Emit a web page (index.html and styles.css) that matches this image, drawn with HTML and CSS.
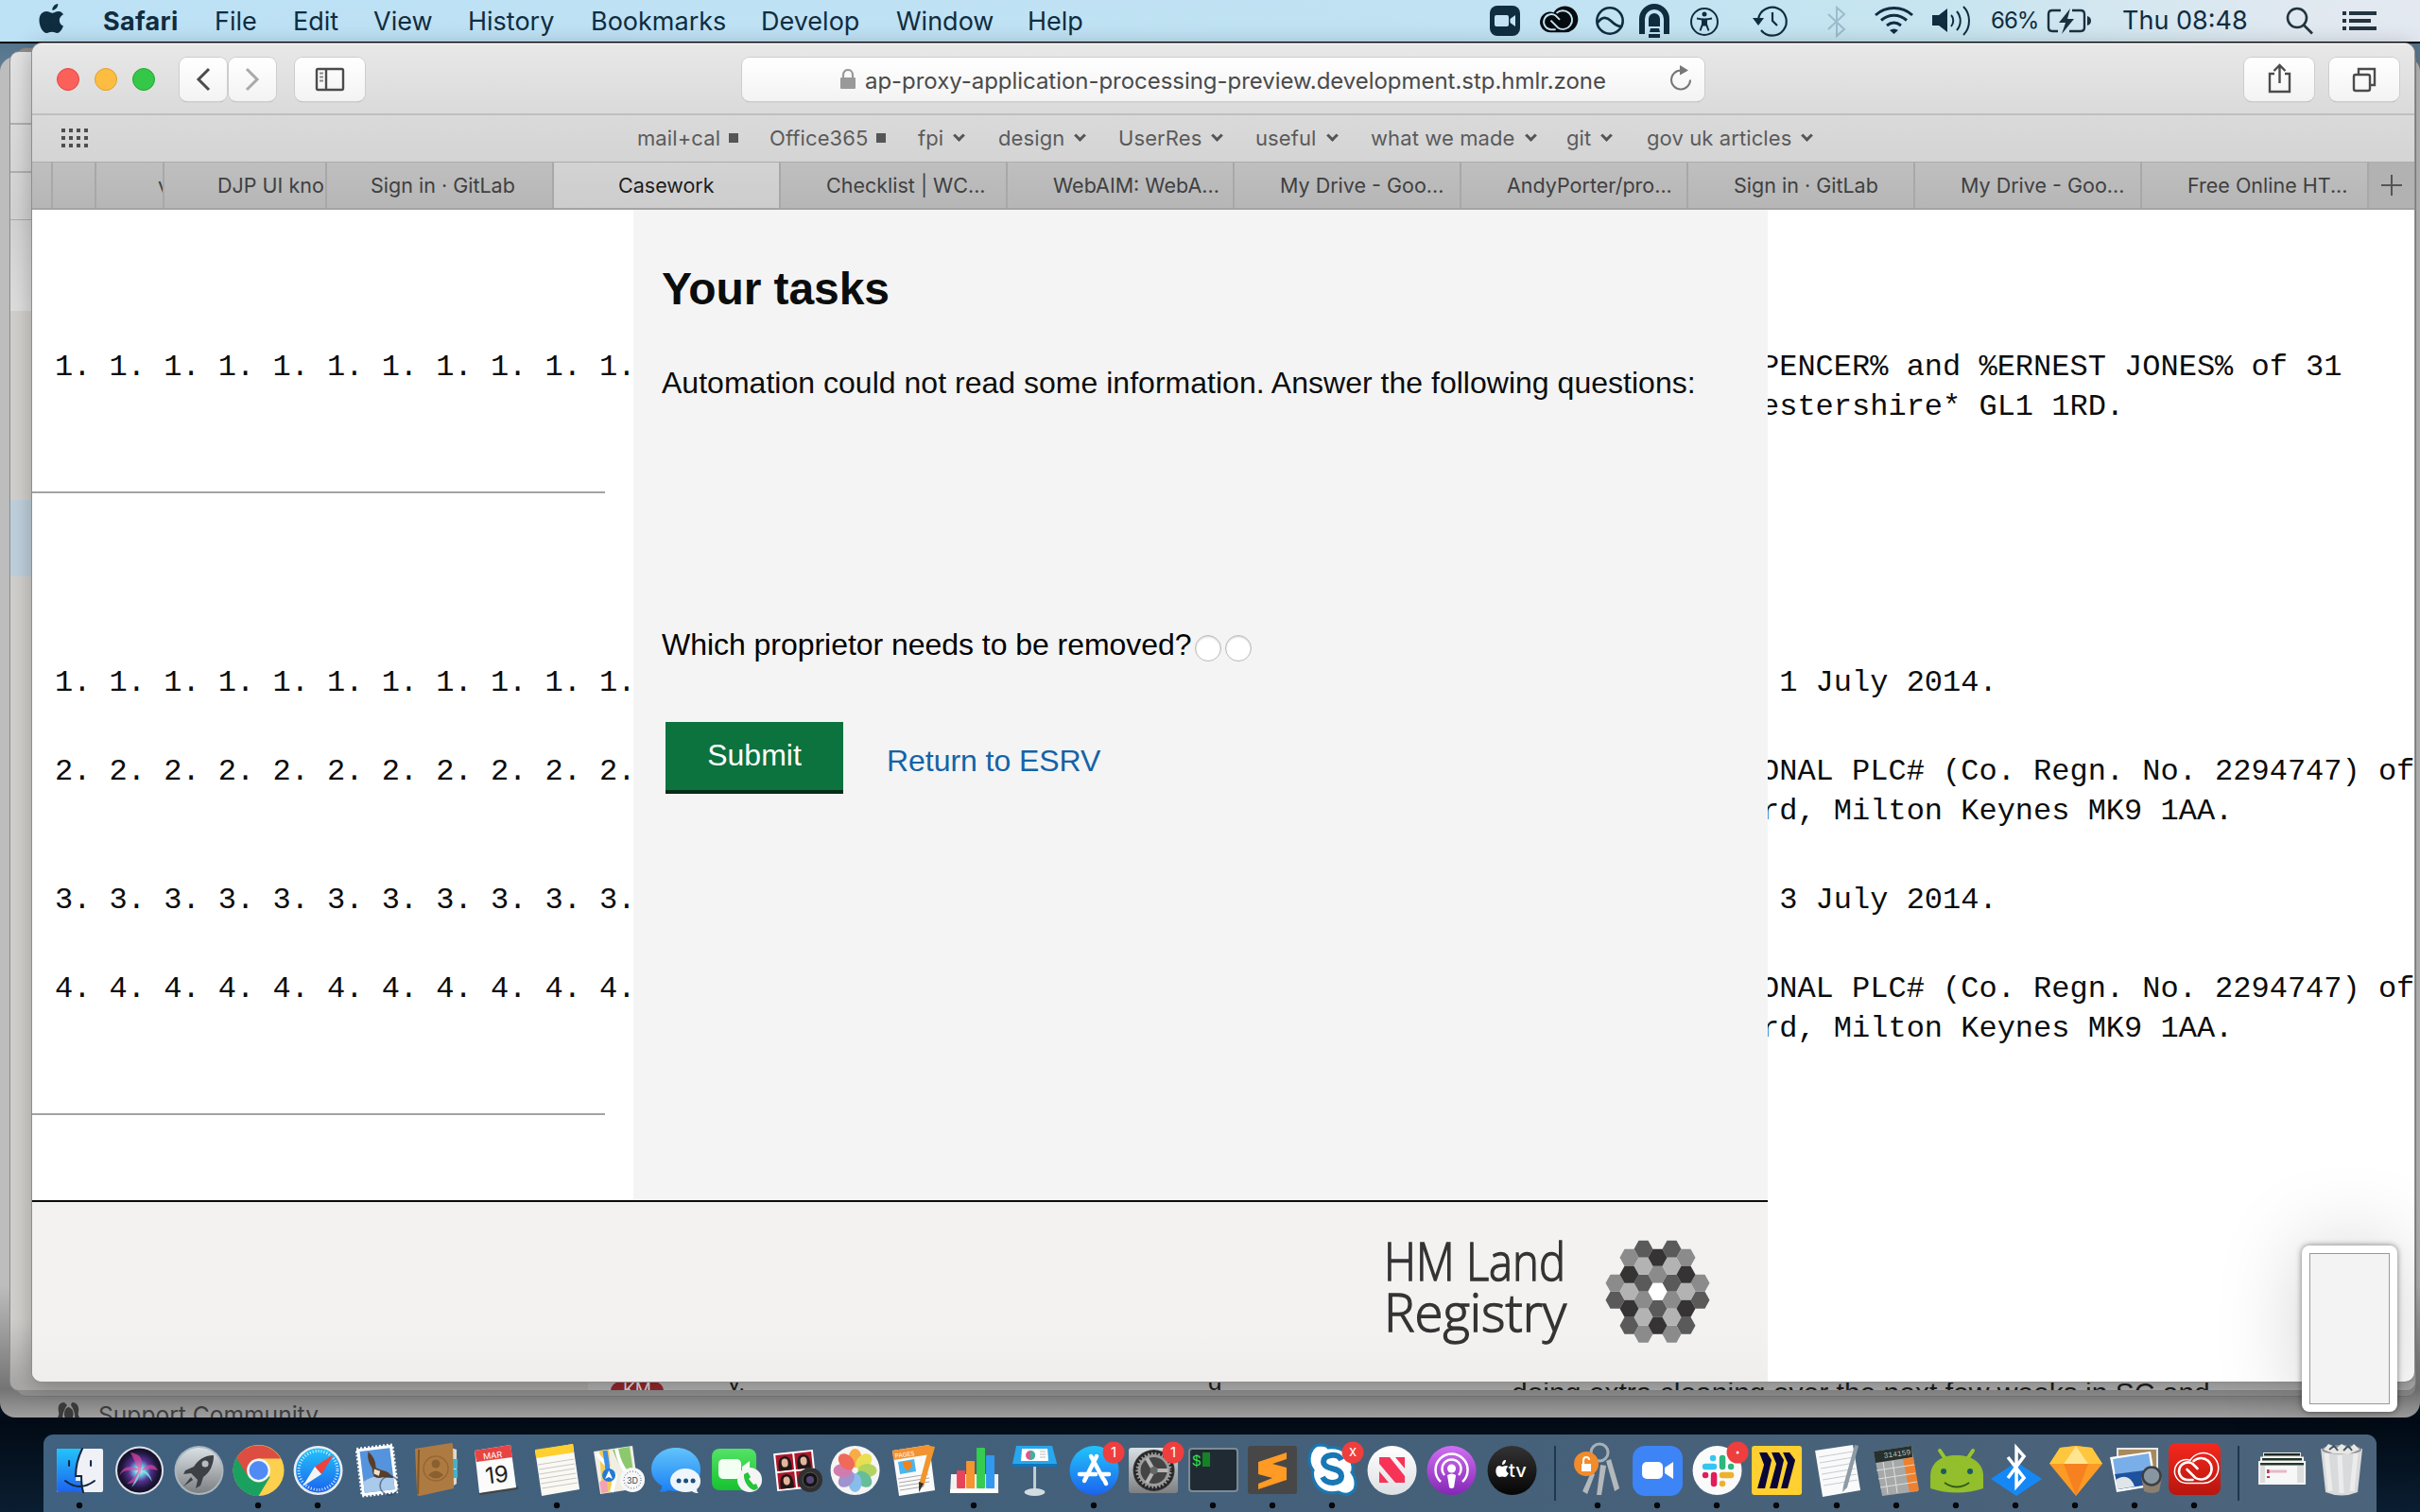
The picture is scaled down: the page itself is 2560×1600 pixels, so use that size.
FILE: index.html
```
<!DOCTYPE html>
<html lang="en">
<head>
<meta charset="utf-8">
<title>Casework</title>
<link rel="stylesheet" href="styles.css">
</head>
<body>
<div class="desktop">
  <header class="menubar">
    <svg class="apple" width="30" height="44" viewBox="0 0 30 44"><path fill="#102d40" d="M22 12c-3 0-4.500 1.700-6.500 1.700S11.500 12 9 12c-4 0-7.500 3.500-7.500 9.500C1.500 28 5.500 35 9.300 35c2 0 3.200-1.200 5.700-1.200 2.400 0 3.400 1.200 5.600 1.200 2.700 0 5-4 6.400-7.500-5.600-2.500-5.400-9.800 0-12.300C26 13.300 24.300 12 22 12zM15.300 10.800c-.2-3.500 2.800-6.600 6-6.800.4 3.700-2.700 6.800-6 6.800z"/></svg>
    <nav class="menus">
      <b>Safari</b><span>File</span><span>Edit</span><span>View</span><span>History</span><span>Bookmarks</span><span>Develop</span><span>Window</span><span>Help</span>
    </nav>
    <div class="status">
      <svg viewBox="1576 0 53 44" width="53" height="44"><rect x="1576" y="6" width="32" height="32" rx="8" fill="#102d40"/><rect x="1581" y="16" width="15" height="12" rx="2" fill="#c3e3f3"/><path fill="#c3e3f3" d="M1597.500 20l5.500-4v12l-5.500-4z"/></svg>
      <svg viewBox="1629 0 59 44" width="59" height="44"><g transform="translate(1620 -10.500) scale(.87)"><path d="M23 51.500a12.500 12.500 0 1 1 4-24.300A16 16 0 1 1 40 51.500z" fill="#060b10"/><g fill="none" stroke="#c3e3f3" stroke-width="2.200"><path d="M34.500 36l-5-5a9.300 9.300 0 1 0-6 17h6M23.500 37l9 9a11.300 11.300 0 1 0-2-18"/></g></g></svg>
      <svg viewBox="1688 0 46 44" width="46" height="44" fill="none" stroke="#102d40" stroke-width="2.600"><circle cx="1703" cy="22" r="13.700"/><path d="M1690 24c5-7 10-6 14-2s7 6 11 6"/></svg>
      <svg viewBox="1734 0 54 44" width="54" height="44"><path fill="none" stroke="#102d40" stroke-width="6" d="M1737 36V20a13 13 0 0 1 26 0v16"/><path fill="#102d40" d="M1744 28v-8a6 6 0 0 1 12 0v8zM1746 30h9l1 4h-11zM1744 36h12v4h-12z"/></svg>
      <svg viewBox="1788 0 65 44" width="65" height="44" fill="none" stroke="#102d40" stroke-width="2"><circle cx="1803" cy="23" r="14"/><circle cx="1803" cy="15" r="2.500" fill="#102d40" stroke="none"/><path d="M1795 19.500l6 1v5l-2.500 7M1811 19.500l-6 1v5l2.500 7M1801 21h4M1801 25h4"/><path d="M1801.500 20.500h3v6h-3z" fill="#102d40"/></svg>
      <svg viewBox="1853 0 79 44" width="79" height="44"><path fill="none" stroke="#102d40" stroke-width="2.200" d="M1860 20a15 15 0 1 1 3 12M1875 13v9l5 5"/><path fill="#102d40" d="M1854 19h12l-6 8z"/></svg>
      <svg viewBox="1932 0 51 44" width="51" height="44"><path fill="none" stroke="#9bbccb" stroke-width="2" d="M1934 15l17 16-8 7V8l8 7-17 16"/></svg>
      <svg viewBox="1983 0 61 44" width="61" height="44" fill="none" stroke="#102d40" stroke-width="3"><path d="M1984 16c11-10 28-10 39 0M1990 21.500c8-7 19-7 27 0M1996 27c5-4 10-4 15 0"/><path fill="#102d40" stroke="none" d="M1999 32c3-2 6-2 9 0l-4.500 4z"/></svg>
      <svg viewBox="2044 0 61 44" width="61" height="44" fill="none" stroke="#102d40" stroke-width="2"><path fill="#102d40" stroke="none" d="M2044 16h7l9-7v25l-9-7h-7z"/><path d="M2064 16c3 3 3 8 0 12M2070 12c5 6 5 14 0 20M2077 7c8 8 8 22 0 30"/></svg>
      <span class="pct">66%</span>
      <svg viewBox="2163 0 82 44" width="82" height="44" fill="none" stroke="#1b313f" stroke-width="2.400"><path d="M2180 11h-9q-4 0-4 4v14q0 4 4 4h6M2192 11h9q4 0 4 4v14q0 4-4 4h-12"/><path fill="#1b313f" stroke="none" d="M2190 9l-12 15h7l-4 12 13-16h-7zM2208 17q4 1 4 5t-4 5z"/></svg>
      <span class="clock">Thu 08:48</span>
      <svg viewBox="2417 0 61 44" width="61" height="44" fill="none" stroke="#22343f" stroke-width="2.600"><circle cx="2430" cy="19" r="10"/><path d="M2437 26.500l9 9"/></svg>
      <svg viewBox="2478 0 38 44" width="38" height="44" fill="#22343f"><path d="M2478 12h4v4h-4zM2485 12h29v4h-29zM2478 20h4v4h-4zM2485 20h23v4h-23zM2478 28h4v4h-4zM2485 28h29v4h-29z"/></svg>
    </div>
  </header>

  <div class="win win-support"><div class="support">
    <svg width="30" height="26" viewBox="0 0 30 26" fill="#3b3b3b"><path d="M10 0C4 0 3 5 4 10c1 4-1 6-3 9v7h8c-2-8-1-16 4-23zM18 0c6 0 8 5 7 10-1 4 1 6 3 9v7h-8c2-8 2-16-3-23z"/><path d="M14 5c-5 2-5 10-2 13v8h6v-8c3-5 2-12-4-13z"/></svg>
    <span>Support Community</span></div></div>
  <div class="win win-third"></div>
  <div class="win win-mail">
    <div class="mail-strip"><i class="band"></i></div>
    <div class="mail-foot"><span class="avatar">KM</span><span class="snip-a">y,</span><span class="snip-b">g</span><span class="snip-c">doing extra cleaning over the next few weeks in SC and</span></div>
  </div>

  <main class="win browser">
    <div class="toolbar">
      <div class="lights"><i class="red"></i><i class="amber"></i><i class="green"></i></div>
      <div class="btn nav"><svg width="50" height="46" viewBox="0 0 50 46" fill="none" stroke="#4b4b4b" stroke-width="3"><path d="M31 12L20 23l11 11"/></svg></div>
      <div class="btn nav"><svg width="50" height="46" viewBox="0 0 50 46" fill="none" stroke="#a9a9a9" stroke-width="3"><path d="M19 12l11 11-11 11"/></svg></div>
      <div class="btn side"><svg width="74" height="46" viewBox="0 0 74 46" fill="none" stroke="#4b4b4b" stroke-width="2.400"><rect x="23" y="12" width="28" height="22" rx="1.500"/><path d="M33 12v22"/><path stroke-width="2" stroke="#888" d="M26 16.500h4M26 20.500h4M26 24.500h4"/></svg></div>
      <div class="url">
        <svg class="lock" width="17" height="22" viewBox="0 0 17 22"><rect x="0" y="9" width="16" height="12" rx="1" fill="#999"/><path d="M3 10V6a5 5 0 0 1 10 0v4" fill="none" stroke="#999" stroke-width="2.200"/></svg>
        <span>ap-proxy-application-processing-preview.development.stp.hmlr.zone</span>
        <svg class="reload" width="26" height="30" viewBox="0 0 26 30"><path d="M13 5.500a10 10 0 1 0 10 10" fill="none" stroke="#777" stroke-width="2"/><path fill="#777" d="M12 0l9 5.500-9 5z"/></svg>
      </div>
      <div class="btn share"><svg width="74" height="46" viewBox="0 0 74 46" fill="none" stroke="#4b4b4b" stroke-width="2.400"><path d="M32 17h-5v19h21V17h-5M37.500 27V8M31.500 14l6-6 6 6"/></svg></div>
      <div class="btn all"><svg width="74" height="46" viewBox="0 0 74 46" fill="none" stroke="#4b4b4b" stroke-width="2.400"><rect x="26" y="18" width="17" height="17" rx="2"/><path d="M31 18v-6h17v17h-5"/></svg></div>
    </div>
    <div class="favs">
      <svg class="dots" width="30" height="22" viewBox="0 0 30 22"><path stroke="#4f4f4f" stroke-width="4" stroke-dasharray="4 4" d="M0 3h29M0 11h29M0 19h29"/></svg>
      <span>mail+cal<i class="sq"></i></span><span>Office365<i class="sq"></i></span><span>fpi<i class="ch"></i></span><span>design<i class="ch"></i></span><span>UserRes<i class="ch"></i></span><span>useful<i class="ch"></i></span><span>what we made<i class="ch"></i></span><span>git<i class="ch"></i></span><span>gov uk articles<i class="ch"></i></span>
    </div>
    <div class="tabs">
      <span class="bare"></span><span class="bare"></span><span class="t-v">v</span><span class="t-djp">DJP UI kno</span><span class="t-sign">Sign in · GitLab</span><span class="active">Casework</span><span>Checklist | WC...</span><span>WebAIM: WebA...</span><span>My Drive - Goo...</span><span>AndyPorter/pro...</span><span>Sign in · GitLab</span><span>My Drive - Goo...</span><span>Free Online HT...</span><span class="plus"></span>
    </div>
    <div class="page">
      <div class="entries left">
        <p>1. 1. 1. 1. 1. 1. 1. 1. 1. 1. 1.</p>
        <hr class="rule-a">
        <p>1. 1. 1. 1. 1. 1. 1. 1. 1. 1. 1.</p>
        <p class="next">2. 2. 2. 2. 2. 2. 2. 2. 2. 2. 2.</p>
        <p class="next two">3. 3. 3. 3. 3. 3. 3. 3. 3. 3. 3.</p>
        <p class="next">4. 4. 4. 4. 4. 4. 4. 4. 4. 4. 4.</p>
        <hr class="rule-b">
      </div>
      <section class="panel">
        <h1>Your tasks</h1>
        <p class="lead">Automation could not read some information. Answer the following questions:</p>
        <div class="question"><span>Which proprietor needs to be removed?</span><i class="radio"></i><i class="radio"></i></div>
        <div class="actions"><button class="submit">Submit</button><a class="back">Return to ESRV</a></div>
      </section>
      <div class="entries right">
        <p>PENCER% and %ERNEST JONES% of 31<br>estershire* GL1 1RD.</p>
        <p class="reg"> 1 July 2014.</p>
        <p class="next">ONAL PLC# (Co. Regn. No. 2294747) of<br>rd, Milton Keynes MK9 1AA.</p>
        <p class="next"> 3 July 2014.</p>
        <p class="next">ONAL PLC# (Co. Regn. No. 2294747) of<br>rd, Milton Keynes MK9 1AA.</p>
      </div>
      <footer class="footer">
        <svg class="logo" width="350" height="116" viewBox="1464 1310 350 116">
          <g class="logo-name"><text x="1464" y="1355" textLength="192" lengthAdjust="spacingAndGlyphs">HM Land</text><text x="1464" y="1409" textLength="193" lengthAdjust="spacingAndGlyphs">Registry</text></g>
          <defs><path id="hx" d="M-10 0l5-9H5l5 9-5 9H-5z"/></defs>
          <g transform="translate(1753.500 1366.800)">
            <g fill="#5a5a5a"><use href="#hx" x="-15" y="-45"/><use href="#hx" x="15" y="-45"/><use href="#hx" x="-15" y="-9"/><use href="#hx" x="15" y="-9"/><use href="#hx" x="-45" y="9"/><use href="#hx" x="45" y="9"/><use href="#hx" y="18"/><use href="#hx" x="-30" y="36"/><use href="#hx" x="30" y="36"/></g>
            <g fill="#8b8b8b"><use href="#hx" x="-30" y="-36"/><use href="#hx" x="30" y="-36"/><use href="#hx" y="-18"/><use href="#hx" x="-45" y="-9"/><use href="#hx" x="45" y="-9"/><use href="#hx" x="-15" y="9"/><use href="#hx" x="15" y="9"/><use href="#hx" x="-15" y="45"/><use href="#hx" x="15" y="45"/></g>
            <g fill="#b3b3b3"><use href="#hx" x="-15" y="-27"/><use href="#hx" x="15" y="-27"/><use href="#hx" x="-30" y="0"/><use href="#hx" x="30" y="0"/><use href="#hx" x="-15" y="27"/><use href="#hx" x="15" y="27"/></g>
            <g fill="#353334"><use href="#hx" y="-36"/><use href="#hx" x="-30" y="-18"/><use href="#hx" x="30" y="-18"/><use href="#hx" x="-30" y="18"/><use href="#hx" x="30" y="18"/><use href="#hx" y="36"/></g>
            <use href="#hx" fill="#fff"/>
          </g>
        </svg>
      </footer>
    </div>
  </main>

  <div class="shot"><div></div></div>

  <svg width="0" height="0" class="defs"><defs>
    <linearGradient id="blue" x2="0" y2="1"><stop stop-color="#22c4fa"/><stop offset="1" stop-color="#1c63ee"/></linearGradient>
    <linearGradient id="sky" x2="0" y2="1"><stop stop-color="#62c4fb"/><stop offset="1" stop-color="#1a80f5"/></linearGradient>
    <linearGradient id="silver" x2="0" y2="1"><stop stop-color="#d9e1e5"/><stop offset="1" stop-color="#7d7f82"/></linearGradient>
    <linearGradient id="green" x2="0" y2="1"><stop stop-color="#54e366"/><stop offset="1" stop-color="#16c22f"/></linearGradient>
    <linearGradient id="purple" x2="0" y2="1"><stop stop-color="#cf6ff2"/><stop offset="1" stop-color="#8427b5"/></linearGradient>
    <linearGradient id="dark" x2="0" y2="1"><stop stop-color="#333"/><stop offset="1" stop-color="#050505"/></linearGradient>
    <linearGradient id="white" x2="0" y2="1"><stop stop-color="#fff"/><stop offset="1" stop-color="#dcdfe2"/></linearGradient>
    <linearGradient id="redg" x2="0" y2="1"><stop stop-color="#f5281d"/><stop offset="1" stop-color="#b8160f"/></linearGradient>
    <radialGradient id="siri"><stop stop-color="#fff"/><stop offset=".22" stop-color="#6ec9e8"/><stop offset=".5" stop-color="#56308f"/><stop offset=".8" stop-color="#20183f"/><stop offset="1" stop-color="#120e22"/></radialGradient>
  </defs></svg>

  <div class="dock">
    <div class="group">
      <svg class="run" viewBox="0 0 63 82"><rect x="7" y="15" width="49" height="46" rx="2" fill="#eff1f6"/><path d="M34 15H9q-2 0-2 2v42q0 2 2 2h26q-2-6-2-12h-6q0-20 7-34z" fill="url(#blue)"/><path d="M34 15q-7 14-7 29h6q0 10 2 17M16 49q15 12 31 0M20 28v5M43 28v5" fill="none" stroke="#12253d" stroke-width="2" stroke-linecap="round"/></svg>
      <svg viewBox="0 0 63 82"><circle cx="31.500" cy="38" r="25.500" fill="#dfe2ea"/><circle cx="31.500" cy="38" r="23.500" fill="url(#siri)"/><path d="M22 19q16 2 11 19 12-12 18 0-10-3-18 0-2 14-15 14 9-6 12-14-16-2-20 6 4-14 20-8z" fill="#e54aa0" opacity=".65"/><path d="M14 47l18-9-9 18q9-8 9-18 8 4 13 12-4-14-13-12z" fill="#79eadf" opacity=".8"/></svg>
      <svg viewBox="0 0 63 82"><circle cx="31.500" cy="38" r="26" fill="#aab6bd"/><circle cx="31.500" cy="38" r="24" fill="url(#silver)"/><path d="M47 22c-11 0-17 6-21 12l-9 4-2 4 8-1 7 7-2 9 5-3 3-9c7-5 11-13 11-23zM23 45l-8 10 10-7z" fill="#3d4146"/><circle cx="38" cy="31" r="3.500" fill="#b6bdc1"/></svg>
      <svg class="run" viewBox="0 0 63 82"><circle cx="31.500" cy="38" r="27" fill="#fdd04d"/><path d="M31.500 38L8.100 24.500A27 27 0 0 0 31.500 65l12-20z" fill="#1ba15f"/><path d="M8.100 24.500a27 27 0 0 1 46.800 1H31.500L20 44z" fill="#de4d42"/><circle cx="31.500" cy="38" r="12.500" fill="#f3f3f3"/><circle cx="31.500" cy="38" r="10" fill="#4f8bf3"/></svg>
      <svg class="run" viewBox="0 0 63 82"><circle cx="31.500" cy="38" r="26" fill="#e9eef2"/><circle cx="31.500" cy="38" r="23.500" fill="url(#blue)"/><circle cx="31.500" cy="38" r="20.500" fill="none" stroke="#d9efff" stroke-width="3" stroke-dasharray="1 2"/><path d="M48 21L28 34l7 8z" fill="#f0413b"/><path d="M15 55l20-13-7-8z" fill="#f4f4f4"/></svg>
      <svg viewBox="0 0 63 82"><g transform="rotate(-7 31 38)"><rect x="12" y="13" width="38" height="50" fill="#fff" stroke="#fff" stroke-width="3" stroke-dasharray="2 2"/><rect x="15" y="16" width="32" height="44" fill="#5594dd"/><path d="M15 48q16-8 32 0v12H15z" fill="#a9caea"/><path d="M24 17q7 8 6 18l5 3q8 2 12 10l-11-2q-5 1-9-2-2-5-1-9-5-9-2-18z" fill="#5a3d28"/><path d="M28 36l6 3-2 5-5-3z" fill="#eee3cc"/></g><circle cx="44" cy="54" r="10" fill="none" stroke="#2b4259" opacity=".6" stroke-width="1.500"/></svg>
      <svg viewBox="0 0 63 82"><path d="M46 14l6 2v36l-6 4z" fill="#dfd9cb"/><path d="M48 26h5v10h-5zM48 37h5v9h-5z" fill="#46b2c6"/><path d="M8 15l38-6q2 0 2 2l1 46-36 8q-3 0-3-3z" fill="#ad7b42"/><path d="M12 16l-1 47" stroke="#835626" stroke-width="2"/><circle cx="30" cy="36" r="13" fill="none" stroke="#966735" stroke-width="1.500"/><circle cx="30" cy="31" r="4.500" fill="#8b602f"/><path d="M22 43q8-9 16 0-8 7-16 0z" fill="#8b602f"/></svg>
      <svg viewBox="0 0 63 82"><path d="M12 62l42-7v3l-40 6z" fill="#444"/><path d="M8 17l38-6 6 45-39 6z" fill="#fbfbfb"/><path d="M8 17l38-6 2 13-38 5z" fill="#e84443"/><g transform="rotate(-7 31 38)" text-anchor="middle" font-family="Inter, sans-serif"><text x="29" y="25" font-size="9" fill="#fff">MAR</text><text x="31" y="51" font-size="24" fill="#222">19</text></g></svg>
      <svg class="run" viewBox="0 0 63 82"><path d="M8 17l40-7 7 48-40 7z" fill="#faf9f4"/><path d="M8 16l40-6 1 9-40 6z" fill="#ffd02e"/><g stroke="#c9c9c5" stroke-width="1"><path d="M11 32l38-6M12 37l38-6M12 42l38-6M13 47l38-6M14 52l38-6M15 57l38-6"/></g></svg>
      <svg viewBox="0 0 63 82"><path d="M7 18l41-6 6 45-40 6z" fill="#f1eee4"/><path d="M13 17l10-1 4 44-11 2z" fill="#f3cc57"/><path d="M27 16l18-3 5 34q-15-8-23-31z" fill="#8cc96c"/><path d="M10 20l20 24-4 17M31 15q4 23 20 33" fill="none" stroke="#fff" stroke-width="4"/><path d="M13 50l8-3 1 14-7 1z" fill="#f3a2b3"/><path d="M19 17l4 28" stroke="#3b8ee8" stroke-width="5"/><circle cx="23" cy="43" r="7" fill="#217bd6"/><path d="M19 47l4-9 4 9-4-2z" fill="#fff"/><circle cx="48" cy="48" r="13" fill="#f7f7f7"/><circle cx="48" cy="48" r="9" fill="none" stroke="#2a5b7e" stroke-dasharray="1 2"/><text x="48" y="52" font-family="Inter, sans-serif" font-size="9" text-anchor="middle" fill="#444">3D</text></svg>
      <svg viewBox="0 0 63 82"><path d="M31 14c15 0 26 10 26 23S46 60 31 60q-4 0-8-1-4 3-10 1 4-2 3-6C9 50 5 44 5 37c0-13 11-23 26-23z" fill="url(#sky)"/><path d="M41 36c9 0 16 6 16 13q0 6-4 9 0 3 2 4-5 0-7-2-3 1-7 1c-9 0-16-5-16-12s7-13 16-13z" fill="#eef6fb"/><g fill="#1b4f7d"><circle cx="34" cy="49" r="2.500"/><circle cx="41.500" cy="49" r="2.500"/><circle cx="49" cy="49" r="2.500"/></g></svg>
      <svg viewBox="0 0 63 82"><rect x="6" y="15" width="47" height="44" rx="8" fill="url(#green)"/><rect x="13" y="26" width="24" height="21" rx="5" fill="#f4fff4"/><path d="M38 34l8-6v18l-8-5z" fill="#f4fff4"/><circle cx="46" cy="48" r="13" fill="#f5f5f5"/><path d="M40 42l4-2 3 5-2 2 5 6 3-1 2 5-4 2c-6-1-12-10-11-17z" fill="#25c43b"/></svg>
      <svg viewBox="0 0 63 82"><g transform="rotate(-6 31 38)"><path d="M10 18h42v40H10z" fill="#fff"/><g fill="#ae172c"><rect x="12" y="20" width="18" height="17"/><rect x="32" y="20" width="18" height="17"/><rect x="12" y="39" width="18" height="17"/><rect x="32" y="39" width="18" height="17"/></g><g fill="#231717"><path d="M14 37q-1-15 7-15t7 15zM34 37q-1-15 7-15t7 15zM14 56q-1-15 7-15t7 15z"/></g><g fill="#e2b69d"><ellipse cx="21" cy="29" rx="3.500" ry="4.500"/><ellipse cx="41" cy="29" rx="3.500" ry="4.500"/><ellipse cx="21" cy="48" rx="3.500" ry="4.500"/></g></g><circle cx="47" cy="48" r="13" fill="#313131"/><circle cx="47" cy="48" r="8" fill="#151515" stroke="#555"/><circle cx="47" cy="48" r="4" fill="#574779"/></svg>
      <svg viewBox="0 0 63 82"><circle cx="31.500" cy="38" r="26" fill="#f5f5f5"/><g opacity=".88"><ellipse cx="31.500" cy="25" rx="7" ry="10" fill="#f9a22d"/><ellipse cx="31.500" cy="25" rx="7" ry="10" transform="rotate(45 31.500 38)" fill="#e8dd3c"/><ellipse cx="31.500" cy="25" rx="7" ry="10" transform="rotate(90 31.500 38)" fill="#a9cf4a"/><ellipse cx="31.500" cy="25" rx="7" ry="10" transform="rotate(135 31.500 38)" fill="#53b78d"/><ellipse cx="31.500" cy="25" rx="7" ry="10" transform="rotate(180 31.500 38)" fill="#78b6e9"/><ellipse cx="31.500" cy="25" rx="7" ry="10" transform="rotate(225 31.500 38)" fill="#9486ca"/><ellipse cx="31.500" cy="25" rx="7" ry="10" transform="rotate(270 31.500 38)" fill="#cd6ba5"/><ellipse cx="31.500" cy="25" rx="7" ry="10" transform="rotate(315 31.500 38)" fill="#ef5746"/></g></svg>
      <svg viewBox="0 0 63 82"><path d="M8 17l39-6 6 48-38 6z" fill="#fafafa"/><path d="M8 17l39-6 1 10-39 6z" fill="#f39232"/><text x="11" y="25" transform="rotate(-8 11 25)" font-family="Inter, sans-serif" font-size="6.500" fill="#fff">PAGES</text><path d="M14 29l17-3 2 13-17 3z" fill="#4ab6ef"/><path d="M19 29l9-1 1 5-5 6-4-5z" fill="#f2821e"/><path d="M14 47l32-5M15 51l32-5M15 55l32-5M16 59l25-4" stroke="#aaa"/><path d="M47 12l6 1-12 42-5-2z" fill="#f0962d"/><path d="M36 50l5 2-5 9z" fill="#333"/></svg>
      <svg class="run" viewBox="0 0 63 82"><path d="M7 42h50v20H6z" fill="#f1f1f1"/><rect x="13" y="38" width="9" height="19" rx="1" fill="#e8455b"/><rect x="23" y="28" width="9" height="29" rx="1" fill="#f4952e"/><rect x="34" y="14" width="9" height="43" rx="1" fill="#35cc50"/><rect x="44" y="22" width="9" height="35" rx="1" fill="#3299f1"/><path d="M6 58h51v4H6z" fill="#fff"/></svg>
      <svg viewBox="0 0 63 82"><path d="M12 12h38l5 19H8z" fill="#29a7ed"/><path d="M8 31h47v3H8z" fill="#0d77bb"/><path d="M18 15h27l1 13H17z" fill="#fff"/><circle cx="27" cy="22" r="5" fill="#e75487"/><path d="M27 17a5 5 0 0 1 0 10z" fill="#35b8a0"/><path d="M37 18h6M37 21h6M37 24h6" stroke="#bbb"/><path d="M30 34h3v26h-3z" fill="#c3cdd4"/><ellipse cx="31.500" cy="61" rx="11" ry="4" fill="#d2dce2"/></svg>
      <svg class="run" viewBox="0 0 63 82"><circle cx="31.500" cy="38" r="26" fill="url(#blue)"/><path d="M34 23L21 49M28 23l13 24M16 42h17M39 42h8M42 48l2 4" stroke="#fff" stroke-width="4.500" stroke-linecap="round"/><g class="badge"><circle cx="52" cy="19" r="11.500"/><text x="52" y="24">1</text></g></svg>
      <svg viewBox="0 0 63 82"><rect x="5" y="14" width="52" height="48" rx="3" fill="url(#silver)"/><circle cx="31.500" cy="38" r="22" fill="#333"/><circle cx="31.500" cy="38" r="19" fill="#9b9b9b" stroke="#222" stroke-width="4" stroke-dasharray="2 2"/><circle cx="31.500" cy="38" r="14" fill="#444"/><path d="M31.500 38h15M31.500 38L24 25M31.500 38L24 51" stroke="#b6b6b6" stroke-width="4"/><circle cx="31.500" cy="38" r="4" fill="#666"/><g class="badge"><circle cx="52" cy="19" r="11.500"/><text x="52" y="24">1</text></g></svg>
      <svg class="run" viewBox="0 0 63 82"><rect x="6" y="15" width="51" height="45" rx="3" fill="#1f2a33" stroke="#7d8b93" stroke-width="2"/><text x="9" y="33" font-family="Liberation Mono, monospace" font-size="16" fill="#34e24a">$</text><rect x="20" y="19" width="8" height="15" fill="#168226"/></svg>
      <svg class="run" viewBox="0 0 63 82"><rect x="5" y="12" width="52" height="51" rx="3" fill="#474747"/><path d="M46 19L16 29v13l15 4-15 6v6l30-10V35l-15-4 15-5z" fill="#ff9a24"/></svg>
      <svg class="run" viewBox="0 0 63 82"><path d="M17 11q8 0 10 3 22-2 26 20 0 5-1 6 6 8 3 18-7 9-17 3Q17 65 11 46q-1-6 0-8-6-8-3-18 3-8 9-9z" fill="#fff" stroke="#1878b4" stroke-width="3"/><path d="M41 27q-3-6-11-5-8 1-8 7 0 5 9 7 10 2 10 8t-9 7q-8 0-11-6" fill="none" stroke="#1878b4" stroke-width="6"/><g class="badge"><circle cx="53" cy="19" r="11.500"/><text x="53" y="23">x</text></g></svg>
      <svg viewBox="0 0 63 82"><circle cx="31.500" cy="38" r="26" fill="url(#white)"/><path d="M18 24h11l16 20v7H35L18 31zM35 24h10v12zM18 51V39l10 12z" fill="#f73458"/></svg>
      <svg viewBox="0 0 63 82"><circle cx="31.500" cy="38" r="26" fill="url(#purple)"/><g fill="none" stroke="#fff" stroke-width="2.500"><path d="M20 50a17 17 0 1 1 23 0M24 43a10 10 0 1 1 15 0"/></g><circle cx="31.500" cy="36" r="4.500" fill="#fff"/><path d="M27 43q4.500-3 9 0l-2 13q-2.500 2-5 0z" fill="#fff"/></svg>
      <svg viewBox="0 0 63 82"><circle cx="31.500" cy="38" r="26" fill="url(#dark)"/><path d="M25 33c-2 0-3 1-4 1s-2-1-3-1c-5 0-5 11 0 12 1 0 2-.6 3-.6s2 .6 3 .6c2 0 3-3 4-4-4-2-3-6-.5-7-1-.8-1.700-1-2.500-1zM21 32c0-3 1-5 4-5 0 3-2 5-4 5z" fill="#fff"/><text x="28" y="45" font-family="Inter, sans-serif" font-size="20" font-weight="500" fill="#fff">tv</text></svg>
    </div>
    <i class="sep"></i>
    <div class="group">
      <svg class="run" viewBox="0 0 63 82"><circle cx="33" cy="19" r="9" fill="none" stroke="#a6b0b6" stroke-width="3"/><path d="M24 40l4 2-8 21-5-3zM34 32l6 1-5 31h-5zM40 28l5-2 9 31-5 3z" fill="#b3b8bb"/><circle cx="19" cy="31" r="13" fill="#f28b2b"/><rect x="14" y="31" width="10" height="8" fill="#fff"/><path d="M16 31v-4a3 3 0 0 1 6 0" fill="none" stroke="#fff" stroke-width="2"/></svg>
      <svg class="run" viewBox="0 0 63 82"><rect x="5" y="12" width="53" height="53" rx="13" fill="#3d84f6"/><rect x="15" y="29" width="22" height="18" rx="5" fill="#fff"/><path d="M39 35l9-6v18l-9-6z" fill="#fff"/></svg>
      <svg class="run" viewBox="0 0 63 82"><circle cx="31.500" cy="38" r="26" fill="#fafafa"/><g stroke-width="6.500" stroke-linecap="round"><path d="M27 25v0M19 34h9" stroke="#36c5f0"/><path d="M37 25v9M46 34v0" stroke="#2eb67d"/><path d="M37 43h9M37 52v0" stroke="#ecb22e"/><path d="M28 43v9M19 43v0" stroke="#e01e5a"/></g><g class="badge"><circle cx="53" cy="19" r="11.500"/><circle cx="53" cy="19" r="1.500" fill="#fff"/></g></svg>
      <svg class="run" viewBox="0 0 63 82"><rect x="5" y="12" width="53" height="52" rx="3" fill="#ffd02f"/><path d="M13 19h8l5 8-7 30h-8l7-25zM26 19h8l5 8-7 30h-8l7-26zM38 19h7l6 8-8 30h-7l7-27z" fill="#0b0638"/></svg>
      <svg class="run" viewBox="0 0 63 82"><path d="M8 17l40-6 8 48-40 7z" fill="#fafafa"/><path d="M12 24l36-6M13 30l36-6M14 36l36-6M15 42l36-6M16 48l36-6M17 54l36-6" stroke="#c7cbd0"/><path d="M50 11l4 1-12 44-5 5 1-7z" fill="#8d9ba7"/></svg>
      <svg class="run" viewBox="0 0 63 82"><path d="M7 18l40-6 7 48-38 5z" fill="#a7a9a9"/><path d="M7 18l40-6 1 12-39 6z" fill="#27302d"/><path d="M38 26l11-2 6 35-10 2z" fill="#ee812e"/><path d="M17 29l5 34M27 28l5 34M10 38l40-6M12 47l39-6M14 56l39-6" stroke="#dedede"/><text x="18" y="25" transform="rotate(-8 18 25)" font-family="Liberation Mono, monospace" font-size="8" fill="#b9c2b8">314159</text></svg>
      <svg class="run" viewBox="0 0 63 82"><path d="M14 17l8 12M49 17l-8 12" stroke="#9ac52f" stroke-width="4" stroke-linecap="round"/><path d="M4 57V44C4 30 15 22 31.500 22S60 30 60 44v13q-28 9-56 0z" fill="#92bf2b"/><circle cx="18" cy="39" r="3" fill="#1c5b62"/><circle cx="46" cy="39" r="3" fill="#1c5b62"/><path d="M19 51q13 9 26 0" fill="none" stroke="#315b1c" stroke-width="2"/></svg>
      <svg class="run" viewBox="0 0 63 82"><path d="M32 29l27 18-27 18L5 47z" fill="#1588f5"/><path d="M23 24l17 22-8 9V14l8 9-17 23" fill="none" stroke="#fff" stroke-width="3.500"/></svg>
      <svg class="run" viewBox="0 0 63 82"><path d="M15 14l17-2 17 2 11 17-28 34L4 31z" fill="#fb9a24"/><path d="M15 14l17-2-13 19H4zM49 14l-17-2 13 19h15z" fill="#ffc73d"/><path d="M32 12l13 19H19z" fill="#ffe58f"/><path d="M19 31h26L32 65z" fill="#f78120"/></svg>
      <svg class="run" viewBox="0 0 63 82"><path d="M12 14h44v38H12z" fill="#e9e9e5"/><path d="M14 16h40v32H14z" fill="#a88a5f"/><path d="M5 24l43-6 6 36-42 7z" fill="#fff"/><path d="M8 26l38-6 5 32-38 6z" fill="#79aee8"/><path d="M10 42l39-5 3 15-38 6z" fill="#1e519e"/><path d="M11 48q14-9 20 7l-18 3z" fill="#dfe6ea"/><path d="M38 45h22l-3 15q-8 4-16 0z" fill="#8a7f70"/><circle cx="49" cy="44" r="9.500" fill="#8796a0" stroke="#3d3f42" stroke-width="2.500"/></svg>
      <svg class="run" viewBox="0 0 63 82"><rect x="4" y="9" width="55" height="55" rx="8" fill="url(#redg)"/><g fill="none" stroke="#fff"><path stroke-width="1.500" d="M23 51.500a12.500 12.500 0 1 1 4-24.300A16 16 0 1 1 40 51.500z"/><path stroke-width="2.600" stroke-linecap="round" d="M34.500 36l-5-5a9.300 9.300 0 1 0-6 17h6M23.500 37l9 9a11.300 11.300 0 1 0-2-18"/></g></svg>
    </div>
    <i class="sep"></i>
    <div class="group">
      <svg viewBox="0 0 63 82"><path d="M12 19h40v20H12z" fill="#e9e9e9"/><path d="M13 20h38v2.500H13z" fill="#1f2a22"/><path d="M9 23.500h46v20H9z" fill="#f4f4f4"/><path d="M11 25h42v2.500H11z" fill="#1f3322"/><path d="M7 28h50v25H7z" fill="#f5f5f5"/><path d="M9 30h46v2.500H9z" fill="#24342c"/><path d="M9 33h46v18H9z" fill="#ddd"/><path d="M14 33h34v18H14z" fill="#f7f7f7"/><rect x="17" y="37.500" width="20" height="3" fill="#e7b9c6"/><path d="M16 37h2.500v4H16zM16 44h3v2h-3z" fill="#b73b52"/></svg>
      <svg viewBox="0 0 63 82"><path d="M10 15h44l-5 46q-17 7-34 0z" fill="#d9dadb"/><path d="M16 20l4 40M47 20l-4 40M30 22l2 40" stroke="#ececec" stroke-width="5"/><ellipse cx="32" cy="16" rx="21" ry="5" fill="#8b9094"/><path d="M13 16l5-6 9 4 5-4 8 5 5-5 6 6-12 5-16-1z" fill="#e9e7e2"/><path d="M19 16l5-4 4 5M34 17l5-5 4 5" stroke="#43566b" stroke-width="2" fill="none"/></svg>
    </div>
  </div>
</div>
</body>
</html>
```
FILE: styles.css
```
* { box-sizing: border-box; }
body { margin: 0; }
.desktop {
  position: relative; width: 2560px; height: 1600px; overflow: hidden;
  font-family: Inter, "Liberation Sans", sans-serif;
  background: linear-gradient(#3d6584 0, #6f8798 100px, #041b30 1450px, #020b15 1505px, #0a1e31 1600px);
}
svg { display: block; flex: none; }
.defs { position: absolute; }

/* menu bar */
.menubar {
  position: relative; display: flex; height: 46px; align-items: flex-start;
  padding-left: 40px; color: #102d40; border-bottom: 2px solid #02060b;
  background: linear-gradient(90deg, #bde1f5, #c0e2f3 60%, #c6e5f0 80%, #dfe8f0 94%, #e4e9f1);
}
.apple { margin-right: 39px; }
.menus {
  display: grid; grid-template-columns: 118px 83px 85px 100px 130px 180px 143px 139px 489px;
  font-size: 27px; line-height: 45px; white-space: nowrap;
}
.menus b { font-weight: 700; letter-spacing: .3px; }
.status { display: flex; line-height: 44px; white-space: nowrap; }
.pct { width: 58px; font-size: 24px; letter-spacing: -1px; padding-left: 1px; }
.clock { width: 172px; font-size: 27px; }

/* stacked windows */
.win { position: absolute; overflow: hidden; border-radius: 10px; }
.win-support {
  left: 0; top: 60px; width: 2560px; height: 1440px; border-radius: 16px;
  background: linear-gradient(#bdbdbd 0, #bdbdbd 1300px, #747474 1410px, #9e9e9e 1440px);
}
.support { display: flex; gap: 16px; padding: 1424px 0 0 58px; align-items: flex-start; color: #3d3d3d; }
.support span { font-size: 24.600px; line-height: 34px; margin-top: -4px; }
.win-third { left: 17px; top: 50px; width: 2539px; height: 1428px; background: #8d8d8d; border: 1px solid #777; }
.win-mail {
  left: 10px; top: 54px; width: 2546px; height: 1418px; border: 1px solid #8c8c8c;
  background: linear-gradient(#e3e3e3 0, #d2d2d2 170px, #dedede 274px, #d2d0cd 274px, #d2d0cd 1340px, #a9a8a7 1408px);
}
.mail-strip {
  display: flex; flex-direction: column; width: 24px; height: 1407px; padding-top: 474px;
  background: linear-gradient(#b0b0b0, #b0b0b0) 0 75px / 24px 2px no-repeat, linear-gradient(#b0b0b0, #b0b0b0) 0 126px / 24px 2px no-repeat, linear-gradient(#aaa, #aaa) 0 177px / 24px 1px no-repeat;
}
.band { height: 81px; background: #bfd0dc; }
.mail-foot {
  display: grid; grid-template-columns: 56px 80px 500px 305px 1fr; height: 10px; overflow: hidden;
  margin-left: 611px; padding-left: 24px; background: #b1b1b1; color: #1d1d1d;
}
.mail-foot > * { height: 10px; overflow: hidden; }
.avatar { background: #94262b; border-radius: 28px 28px 0 0; color: #ddd; font-size: 19px; line-height: 17px; text-align: center; }
.snip-a, .snip-b { font-family: "Liberation Sans", sans-serif; font-size: 26px; line-height: 0; }
.snip-a { width: 100px; padding-left: 68px; line-height: 2px; }
.snip-b { width: 540px; padding-left: 496px; line-height: 0; }
.snip-c { grid-column: 5; margin-left: 12px; font-family: "Liberation Sans", sans-serif; font-size: 30px; line-height: 23px; white-space: nowrap; }

/* browser window */
.browser { left: 34px; top: 46px; width: 2520px; height: 1416px; background: #fff; box-shadow: 0 0 0 1px #8f8f8f, 0 4px 24px rgba(0,0,0,.28); }
.toolbar {
  display: flex; align-items: flex-start; height: 76px; padding: 14px 16px 0 26px;
  background: linear-gradient(#e8e8e8, #dadada); border-bottom: 2px solid #bfbfbf; border-top: 1px solid #f6f6f6;
}
.lights { display: flex; gap: 16px; padding-top: 11px; width: 130px; }
.lights i { width: 24px; height: 24px; border-radius: 50%; }
.red { background: #fc605b; border: 1px solid #e2453f; }
.amber { background: #fdbd40; border: 1px solid #dfa02c; }
.green { background: #34c748; border: 1px solid #24a732; }
.btn, .url {
  height: 46px; border-radius: 8px; background: linear-gradient(#fff, #f3f3f3);
  box-shadow: 0 0 0 1px #cdcdcd, 0 2px 1px -1px #999;
}
.nav { width: 50px; margin-right: 2px; }
.side { width: 74px; margin-left: 18px; }
.url { display: flex; align-items: center; width: 1018px; margin-left: 399px; padding-left: 104px; color: #4a4a4a; font-size: 24px; }
.url span { width: 790px; margin: 3px 0 0 9px; white-space: nowrap; letter-spacing: -.04px; }
.url .reload { margin-left: 60px; }
.share { margin-left: 571px; }
.all { margin-left: 16px; }
.favs {
  display: grid; grid-template-columns: 609px 140px 157px 85px 127px 145px 122px 207px 85px 1fr;
  height: 50px; padding: 0 0 2px 31px; align-items: center; color: #5b5b5b; font-size: 22px; white-space: nowrap;
  background: linear-gradient(#dadada, #d4d4d4); border-bottom: 1px solid #adadad;
}
.favs span { display: flex; align-items: center; letter-spacing: .1px; }
.sq { width: 10px; height: 10px; margin-left: 9px; background: #555; }
.ch { width: 9px; height: 9px; margin: -5px 0 0 12px; border: solid #555; border-width: 0 3px 3px 0; transform: rotate(45deg); }
.tabs {
  display: grid; grid-template-columns: 22px 46px 72px 172px 240px repeat(8, 240px) 1fr;
  height: 50px; background: linear-gradient(#bfbfbf, #b6b6b6); border-bottom: 2px solid #a3a3a3;
  color: #404040; font-size: 21.500px; line-height: 48px; white-space: nowrap;
}
.tabs span { overflow: hidden; padding-left: 48px; border-right: 2px solid #a8a8a8; }
.tabs .bare { padding: 0; }
.tabs .t-v { padding-left: 65px; }
.tabs .t-djp { padding-left: 56px; }
.tabs .t-sign { padding-left: 46px; }
.tabs .active { padding-left: 68px; background: linear-gradient(#d3d3d3, #cdcdcd); color: #1c1c1c; }
.tabs .plus {
  padding: 0; border: 0;
  background: linear-gradient(#555, #555) center / 22px 2px no-repeat, linear-gradient(#555, #555) center / 2px 22px no-repeat, #b2b2b2;
}

/* web page */
.page {
  display: grid; grid-template-columns: 636px 1200px 684px; grid-template-rows: 1048px 192px;
  height: 1240px; font-family: "Liberation Sans", Arial, sans-serif; color: #0b0c0c;
}
.entries { overflow: hidden; padding-top: 146px; font: 32px/42px "Liberation Mono", "Courier New", monospace; }
.entries p { margin: 0; white-space: pre; }
.entries .next { margin-top: 52px; }
.entries .two { margin-top: 94px; }
.left p { padding-left: 24px; }
.left hr { width: 606px; height: 2px; margin: 0; border: 0; background: #a3a3a3; }
.left .rule-a { margin: 110px 0 180px; }
.left .rule-b { margin-top: 110px; }
.right p { margin-left: -7px; }
.right .reg { margin-top: 250px; }
.panel { background: #f4f4f4; padding: 54px 30px 0; }
.panel h1 { margin: 0; font-size: 48px; line-height: 60px; letter-spacing: -.1px; }
.lead { margin: 49px 0 0; font-size: 32px; line-height: 40px; white-space: nowrap; letter-spacing: .02px; }
.question { display: flex; align-items: center; margin-top: 238px; font-size: 32px; line-height: 38px; }
.question span { width: 564px; color: #000; letter-spacing: -.04px; white-space: nowrap; }
.radio { width: 28px; height: 28px; margin: 8px 4px 0 0; border-radius: 50%; background: #fff; border: 1px solid #bbb; box-shadow: inset 0 1px 2px #ccc; }
.actions { display: flex; align-items: flex-start; margin: 63px 0 0 4px; }
.submit { width: 188px; height: 76px; padding: 2px 0 4px; border: 0; border-bottom: 4px solid #002d18; background: #0c723e; color: #fff; font: 32px/66px "Liberation Sans", sans-serif; }
.back { margin: 21px 0 0 46px; color: #1263a8; font-size: 32px; line-height: 40px; letter-spacing: -.05px; }
.footer { grid-column: 1 / 3; display: flex; align-items: flex-start; padding: 38px 0 0 1430px; border-top: 2px solid #0b0c0c; background: linear-gradient(#f3f2f1 70%, #efeeed); }
.logo-name { font: 300 56px "Open Sans", "Noto Sans", sans-serif; fill: #353334; stroke: #353334; stroke-width: 1.4; }

/* screenshot thumbnail */
.shot { position: absolute; left: 2435px; top: 1318px; width: 101px; height: 176px; padding: 8px; border-radius: 8px; background: #fff; box-shadow: 0 0 6px rgba(0,0,0,.5), 0 0 90px rgba(0,0,0,.18); }
.shot div { height: 160px; border: 1px solid #999; background: #f3f3f3; }

/* dock */
.dock {
  position: absolute; left: 46px; top: 1518px; width: 2468px; height: 82px; display: flex; padding-left: 6.500px;
  border-radius: 10px 10px 0 0; background: linear-gradient(90deg, #40617f, #456079 60%, #4c647b);
}
.group { display: flex; }
.group svg { width: 63.130px; height: 82px; overflow: visible; }
.group .run { background: radial-gradient(circle at 31px 75px, #05080c 3px, transparent 3.600px); }
.sep { width: 2px; height: 58px; margin: 12px 13.200px 0; background: #1c3851; }
.badge { fill: #ee3e3e; }
.badge text { fill: #fff; font: 15px Inter, sans-serif; text-anchor: middle; }
```
